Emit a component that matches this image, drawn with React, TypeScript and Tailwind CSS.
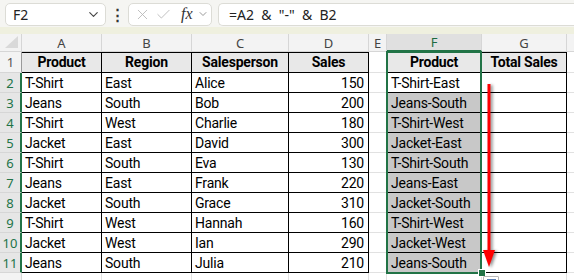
import { ChevronDown, X, Check } from "lucide-react";

const rows: [string, string, string, number, string][] = [
  ["T-Shirt", "East", "Alice", 150, "T-Shirt-East"],
  ["Jeans", "South", "Bob", 200, "Jeans-South"],
  ["T-Shirt", "West", "Charlie", 180, "T-Shirt-West"],
  ["Jacket", "East", "David", 300, "Jacket-East"],
  ["T-Shirt", "South", "Eva", 130, "T-Shirt-South"],
  ["Jeans", "East", "Frank", 220, "Jeans-East"],
  ["Jacket", "South", "Grace", 310, "Jacket-South"],
  ["T-Shirt", "West", "Hannah", 160, "T-Shirt-West"],
  ["Jacket", "West", "Ian", 290, "Jacket-West"],
  ["Jeans", "South", "Julia", 210, "Jeans-South"],
];

const cols = ["A", "B", "C", "D", "E", "F", "G"];

const cellFont = { fontFamily: '"Roboto", sans-serif' };

function FormulaBar() {
  return (
    <div className="h-[27px] bg-[#f5f5f2] flex items-center pl-[5px] pt-[1px]" style={{ fontFamily: '"Noto Sans", "Open Sans", sans-serif' }}>
      <div className="w-[101px] h-[23px] bg-white border border-[#dcdcd6] rounded-[5px] flex items-center justify-between pl-[7px] pr-[4px]">
        <span className="text-[14px] text-[#222]">F2</span>
        <ChevronDown className="w-[15px] h-[15px] text-[#444]" strokeWidth={1.8} />
      </div>
      <div className="w-[22px] flex justify-center text-[#333] text-[15px] font-bold leading-none">⋮</div>
      <div className="w-[84px] h-[23px] bg-white border border-[#dcdcd6] rounded-[5px] flex items-center pl-[5px] gap-[4px]">
        <X className="w-[17px] h-[17px] text-[#b5b5b5]" strokeWidth={1.2} />
        <Check className="w-[17px] h-[17px] text-[#b5b5b5]" strokeWidth={1.2} />
        <span className="ml-[5px] text-[16px] italic text-[#333] leading-none" style={{ fontFamily: '"Liberation Serif", serif' }}>fx</span>
        <ChevronDown className="w-[12px] h-[12px] text-[#777]" strokeWidth={1.5} />
      </div>
      <div className="ml-[6px] flex-1 h-[23px] bg-white border border-[#dcdcd6] rounded-l-[5px] border-r-0 flex items-center pl-[10px]">
        <span className="text-[14px] text-[#222] whitespace-pre">{'=A2  &  "-"  &  B2'}</span>
      </div>
    </div>
  );
}

export default function App() {
  const greenRow = "bg-[#e6e6e6] text-[#217346] border-r-2 border-r-[#217346]";
  return (
    <div className="w-[574px] h-[280px] overflow-hidden bg-white">
      <FormulaBar />
      <div className="h-[7px] bg-[#eff0df]" />
      <div className="relative">
        <div
          className="grid grid-cols-[22px_80px_90px_97px_80px_18px_95px_85px_1fr] grid-rows-[18px_21px_repeat(11,20px)] text-[14px] leading-[18px] tracking-[-0.2px] text-black"
          style={cellFont}
        >
          {/* column headers */}
          <div className="relative bg-[#f3f3f3] border-r border-b border-[#d6d6d6]">
            <div className="absolute right-[3px] bottom-[3px] w-0 h-0 border-l-[13px] border-l-transparent border-b-[12px] border-b-[#d9d9d9]" />
          </div>
          {cols.map((c) => (
            <div
              key={c}
              className={
                c === "F"
                  ? "bg-[#e0e0e0] text-[#1d6b40] border-r border-[#d6d6d6] border-b-2 border-b-[#217346] flex items-center justify-center text-[13px] tracking-normal"
                  : "bg-[#f3f3f3] text-[#444] border-r border-b border-[#d6d6d6] flex items-center justify-center text-[13px] tracking-normal"
              }
              style={{ fontFamily: '"Noto Sans", "Open Sans", sans-serif' }}
            >
              {c}
            </div>
          ))}
          <div className="bg-[#f3f3f3] border-b border-[#d6d6d6]" />

          {/* row 1 */}
          <div className="bg-[#f3f3f3] text-[#555] border-r border-b border-r-[#9a9a9a] border-b-[#d6d6d6] flex items-center justify-center text-[13px] tracking-normal" style={{ fontFamily: '"Noto Sans", sans-serif' }}>1</div>
          {["Product", "Region", "Salesperson", "Sales"].map((h) => (
            <div key={h} className="bg-[#e8e8e8] border-r border-b border-t border-black font-bold flex items-end pb-[1px] justify-center">{h}</div>
          ))}
          <div className="border-r border-b border-r-black border-b-[#e1e1e1]" />
          <div className="bg-[#e8e8e8] border-r border-b border-t border-black font-bold flex items-end pb-[1px] justify-center">Product</div>
          <div className="bg-[#e8e8e8] border-r border-b border-t border-black font-bold flex items-end pb-[1px] justify-center">Total Sales</div>
          <div className="border-b border-[#e1e1e1]" />

          {rows.map((r, i) => (
            <div key={i} className="contents">
              <div className={`${greenRow} border-b border-b-[#d6d6d6] flex items-center justify-center text-[13px] tracking-normal`} style={{ fontFamily: '"Noto Sans", sans-serif' }}>{i + 2}</div>
              <div className="border-r border-b border-black flex items-end pb-[0px] pl-[3px]">{r[0]}</div>
              <div className="border-r border-b border-black flex items-end pl-[3px]">{r[1]}</div>
              <div className="border-r border-b border-black flex items-end pl-[3px]">{r[2]}</div>
              <div className="border-r border-b border-black flex items-end justify-end pr-[4px]">{r[3]}</div>
              <div className="border-r border-b border-r-black border-b-[#e1e1e1]" />
              <div className={`${i === 0 ? "bg-white" : "bg-[#c8c8c8]"} border-r border-b border-black flex items-end pl-[4px]`}>{r[4]}</div>
              <div className="border-r border-b border-black" />
              <div className="border-b border-[#e1e1e1]" />
            </div>
          ))}

          {/* row 12 */}
          <div className="bg-[#f3f3f3] border-r border-[#d6d6d6]" />
          {cols.map((c) => (
            <div key={c} className="border-r border-[#e1e1e1]" />
          ))}
          <div />
        </div>

        {/* selection outline */}
        <div className="absolute left-[386px] top-[17px] w-[96px] h-[223px] border-2 border-[#217346] pointer-events-none" />
        {/* fill handle */}
        <div className="absolute left-[478px] top-[235px] w-[8px] h-[8px] bg-[#217346] border border-white" />
        {/* quick analysis */}
        <div className="absolute left-[483px] top-[242px] w-[16px] h-[14px] bg-white border border-[#b8b8b8] rounded-[1px] flex justify-center pt-[2px]">
          <div className="w-[9px] h-[5px] bg-[#9fb8d9] border border-[#5b7fb3]" />
        </div>
        {/* red arrow */}
        <svg className="absolute left-[482px] top-[48px] drop-shadow-[2px_1px_1.5px_rgba(0,0,0,0.45)]" width="18" height="188" viewBox="0 0 18 188">
          <rect x="5.5" y="2" width="3" height="168" fill="#ff0000" />
          <polygon points="1,168 13,168 7,185" fill="#ff0000" />
        </svg>
      </div>
    </div>
  );
}
